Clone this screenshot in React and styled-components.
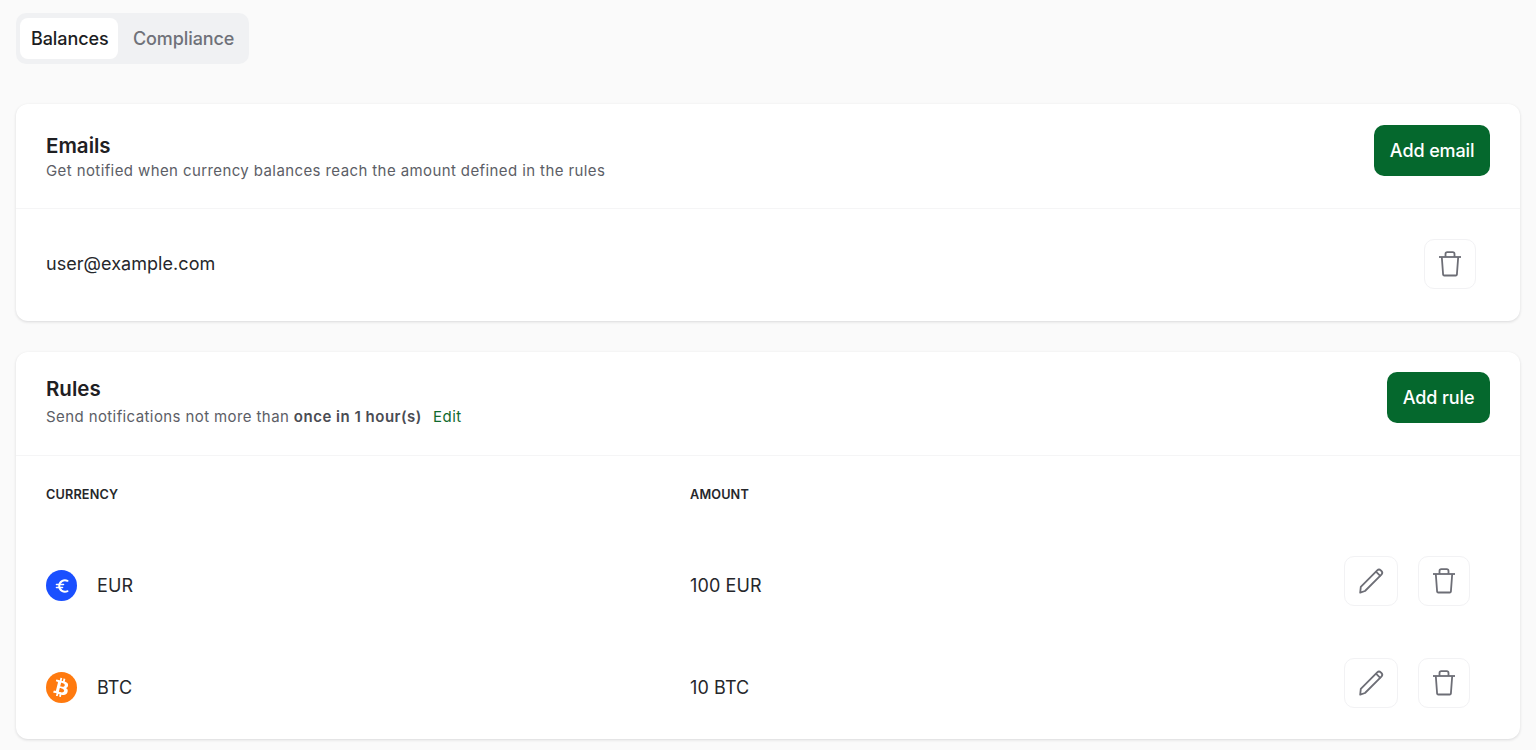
import styled, { createGlobalStyle } from 'styled-components';
import { FaBtc } from 'react-icons/fa';

const Global = createGlobalStyle`
  html, body { margin: 0; padding: 0; background: #fafafa; }
  body { font-family: Inter, "Liberation Sans", sans-serif; color: #1f2023; overflow: hidden; }
`;

const Page = styled.div`
  width: 1536px;
  height: 750px;
  box-sizing: border-box;
  padding: 13px 16px 0;
  display: flex;
  flex-direction: column;
  align-items: stretch;
`;

const Tabs = styled.div`
  align-self: flex-start;
  display: flex;
  height: 51px;
  box-sizing: border-box;
  padding: 5px 4px;
  background: #f0f1f3;
  border-radius: 10px;
  margin-bottom: 40px;
`;

const Tab = styled.div`
  display: flex;
  align-items: center;
  height: 41px;
  padding-left: ${p => (p.$active ? '11px' : '15px')};
  width: ${p => (p.$active ? '98px' : '127px')};
  box-sizing: border-box;
  border-radius: 8px;
  font-size: 18px;
  font-weight: 500;
  letter-spacing: -0.1px;
  background: ${p => (p.$active ? '#fff' : 'transparent')};
  color: ${p => (p.$active ? '#1c1d22' : '#6f7179')};
`;

const Card = styled.section`
  background: #fff;
  border-radius: 12px;
  box-shadow: 0 1px 3px rgba(20, 22, 30, 0.14);
  margin-bottom: ${p => p.$gap || 0}px;
`;

const CardHead = styled.header`
  display: flex;
  justify-content: space-between;
  align-items: flex-start;
  height: ${p => p.$h}px;
  box-sizing: border-box;
  padding: ${p => p.$top}px 30px 0;
  border-bottom: 1px solid #f5f5f6;
`;

const Title = styled.h2`
  margin: ${p => p.$top}px 0 0;
  font-size: 20.500px;
  line-height: 28px;
  font-weight: 600;
  color: #1f2023;
`;

const Sub = styled.p`
  margin: ${p => p.$top || 0}px 0 0;
  font-size: 15px;
  line-height: 22px;
  letter-spacing: 0.4px;
  color: #5c5e66;
  strong { font-weight: 600; color: #4a4c53; letter-spacing: 0.5px; }
`;

const EditLink = styled.span`
  margin-left: 11px;
  color: #0f6a2e;
  letter-spacing: 0.5px;
`;

const PrimaryButton = styled.button`
  height: 51px;
  padding: 0 15.500px;
  border: none;
  border-radius: 10px;
  background: #05682d;
  color: #fff;
  font-family: inherit;
  font-size: 18px;
  font-weight: 500;
  letter-spacing: -0.1px;
`;

const EmailRow = styled.div`
  height: 112px;
  box-sizing: border-box;
  padding: 0 44px 2px 30px;
  display: flex;
  align-items: center;
  justify-content: space-between;
  font-size: 18px;
  letter-spacing: 0.05px;
  color: #26272b;
`;

const EmailText = styled.span`
  margin-bottom: 2px;
`;

const IconButton = styled.button`
  width: ${p => p.$w || 52}px;
  height: 50px;
  padding: 0;
  background: #fff;
  border: 1px solid #f2f2f4;
  border-radius: 10px;
  display: flex;
  align-items: center;
  justify-content: center;
  color: #6d6e76;
`;

const RuleGrid = styled.div`
  display: grid;
  grid-template-columns: 644px 1fr auto;
  padding: 0 50px 0 30px;
  align-items: center;
`;

const HeadRow = styled(RuleGrid)`
  height: 79px;
  padding-bottom: 2px;
  box-sizing: border-box;
  font-size: 12.700px;
  font-weight: 600;
  color: #26272b;
  letter-spacing: 0.15px;
`;

const Row = styled(RuleGrid)`
  height: ${p => p.$h}px;
  font-size: 18px;
  letter-spacing: 0.1px;
  color: #26272b;
`;

const Currency = styled.div`
  display: flex;
  align-items: center;
  gap: 20px;
`;

const Coin = styled.span`
  width: 31px;
  height: 31px;
  border-radius: 50%;
  background: ${p => p.$color};
  display: flex;
  align-items: center;
  justify-content: center;
  color: #fff;
  svg { transform: rotate(${p => p.$tilt || 0}deg); }
`;

const Actions = styled.div`
  display: flex;
  gap: 20px;
  margin-top: -10px;
`;

const TrashIcon = () => (
  <svg width="24" height="26" viewBox="0 0 24 26" fill="none" stroke="currentColor" strokeWidth="1.800" strokeLinejoin="round">
    <path d="M1 6h22" />
    <path d="M7.500 6V3c0-1 .8-1.800 1.800-1.800h5.400c1 0 1.800.8 1.800 1.800v3" />
    <path d="M3.800 6l1.300 17.500c.1.600.5 1 1.100 1h11.600c.6 0 1-.4 1.100-1L20.200 6" />
  </svg>
);

const PencilIcon = () => (
  <svg width="26" height="26" viewBox="0 0 26 26" fill="none" stroke="currentColor" strokeWidth="1.800" strokeLinejoin="round" strokeLinecap="round">
    <path d="M2.800 18.800 19.200 2.400c1-1 2.600-1 3.600 0l.6.6c1 1 1 2.600 0 3.600L7 23l-4.800 1.600z" />
    <path d="M18.200 3.800l3.800 3.800" />
  </svg>
);

const EuroIcon = () => (
  <svg width="14" height="16" viewBox="0 0 14 16" fill="none" stroke="currentColor" strokeWidth="2" strokeLinecap="round">
    <path d="M12.500 2.800A5.800 5.800 0 0 0 4.200 8a5.800 5.800 0 0 0 8.300 5.200" />
    <path d="M1.500 6.500h7M1.500 9.500h6" strokeWidth="1.600" />
  </svg>
);

const rules = [
  { code: 'EUR', amount: '100 EUR', color: '#1a4fff', icon: <EuroIcon />, tilt: 0, h: 101 },
  { code: 'BTC', amount: '10 BTC', color: '#ff7a0f', icon: <FaBtc size={19} />, tilt: 14, h: 103 },
];

export default function App() {
  return (
    <Page>
      <Global />
      <Tabs>
        <Tab $active>Balances</Tab>
        <Tab>Compliance</Tab>
      </Tabs>

      <Card $gap={31}>
        <CardHead $h={105} $top={21}>
          <div>
            <Title $top={7}>Emails</Title>
            <Sub>Get notified when currency balances reach the amount defined in the rules</Sub>
          </div>
          <PrimaryButton>Add email</PrimaryButton>
        </CardHead>
        <EmailRow>
          <EmailText>user@example.com</EmailText>
          <IconButton><TrashIcon /></IconButton>
        </EmailRow>
      </Card>

      <Card>
        <CardHead $h={104} $top={20}>
          <div>
            <Title $top={3}>Rules</Title>
            <Sub $top={3}>
              Send notifications not more than <strong>once in 1 hour(s)</strong>
              <EditLink>Edit</EditLink>
            </Sub>
          </div>
          <PrimaryButton>Add rule</PrimaryButton>
        </CardHead>
        <HeadRow>
          <div>CURRENCY</div>
          <div>AMOUNT</div>
          <div />
        </HeadRow>
        {rules.map(r => (
          <Row key={r.code} $h={r.h}>
            <Currency>
              <Coin $color={r.color} $tilt={r.tilt}>{r.icon}</Coin>
              {r.code}
            </Currency>
            <div>{r.amount}</div>
            <Actions>
              <IconButton $w={54}><PencilIcon /></IconButton>
              <IconButton $w={52}><TrashIcon /></IconButton>
            </Actions>
          </Row>
        ))}
      </Card>
    </Page>
  );
}
